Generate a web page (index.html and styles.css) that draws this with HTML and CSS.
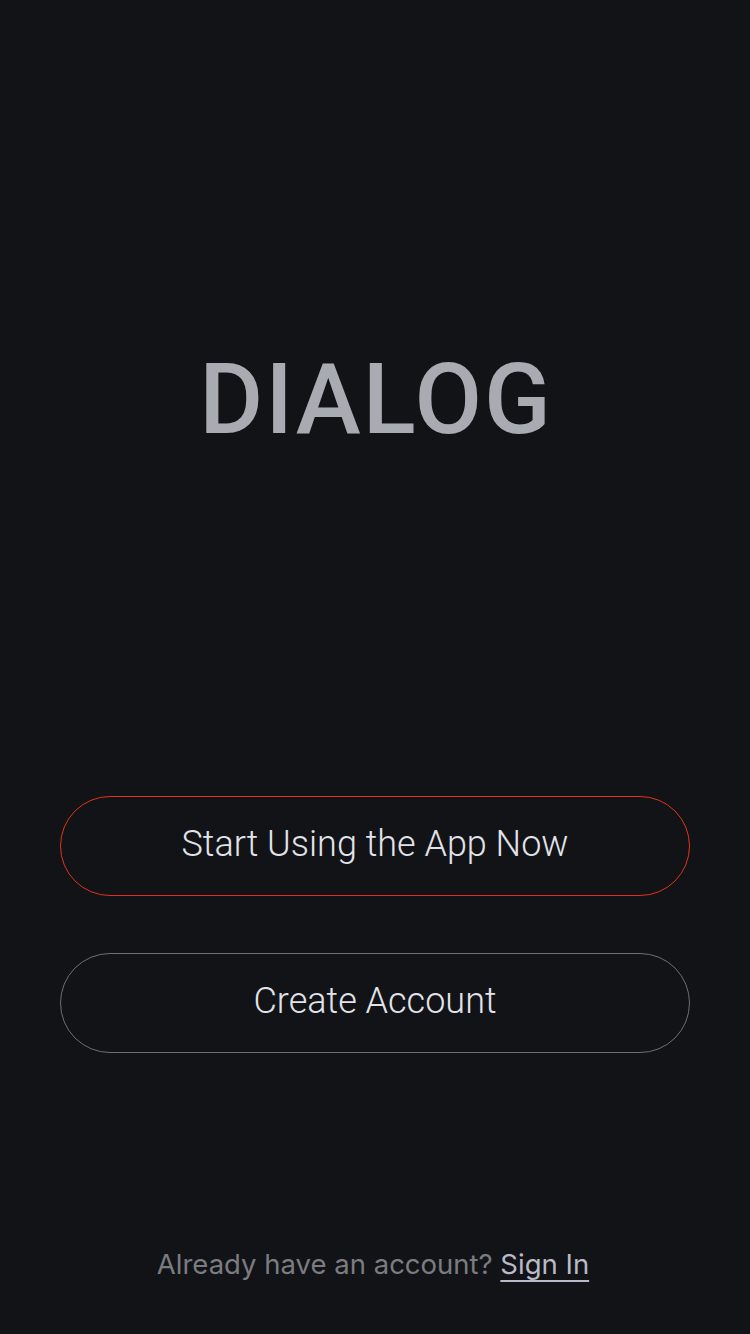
FILE: index.html
```html
<!DOCTYPE html>
<html>
<head>
<meta charset="utf-8">
<link rel="stylesheet" href="styles.css">
</head>
<body>
    <div id="screen">
        <div class="logo-area">
            <h1 class="logo">DIALOG</h1>
        </div>
        <div class="actions">
            <button class="pill pill-primary">Start Using the App Now</button>
            <button class="pill">Create Account</button>
        </div>
        <p class="footer">
            Already have an account? <a href="#" class="signin">Sign In</a>
        </p>
    </div>
</body>
</html>
```
FILE: styles.css
```css
html, body {
    margin: 0;
    padding: 0;
    background-color: #121316;
}

#screen {
    width: 750px;
    height: 1334px;
    display: flex;
    flex-direction: column;
    align-items: center;
}

.logo-area {
    height: 796px;
    display: flex;
    flex-direction: column;
    align-items: center;
}

.logo {
    margin: 340px -2px 0 0;
    font-family: Roboto, "Noto Sans", sans-serif;
    font-weight: 500;
    font-size: 98px;
    line-height: 120px;
    letter-spacing: 2px;
    color: #a9abb2;
}

.actions {
    display: flex;
    flex-direction: column;
    gap: 57px;
}

.pill {
    width: 630px;
    height: 100px;
    padding: 0 0 4px 0;
    border-radius: 50px;
    border: 1px solid #6e6f74;
    background: transparent;
    color: #e2e3ea;
    font-family: Roboto, "Noto Sans", sans-serif;
    font-weight: 300;
    font-size: 36px;
    cursor: pointer;
}

.pill-primary {
    border-color: #e5311c;
}

.footer {
    margin: 194px 4px 0 0;
    font-family: Inter, "Noto Sans", sans-serif;
    font-size: 27.5px;
    color: #7b7c82;
}

.signin {
    color: #b9bac8;
    text-decoration: underline;
    text-underline-offset: 6px;
    text-decoration-thickness: 2px;
}
```
